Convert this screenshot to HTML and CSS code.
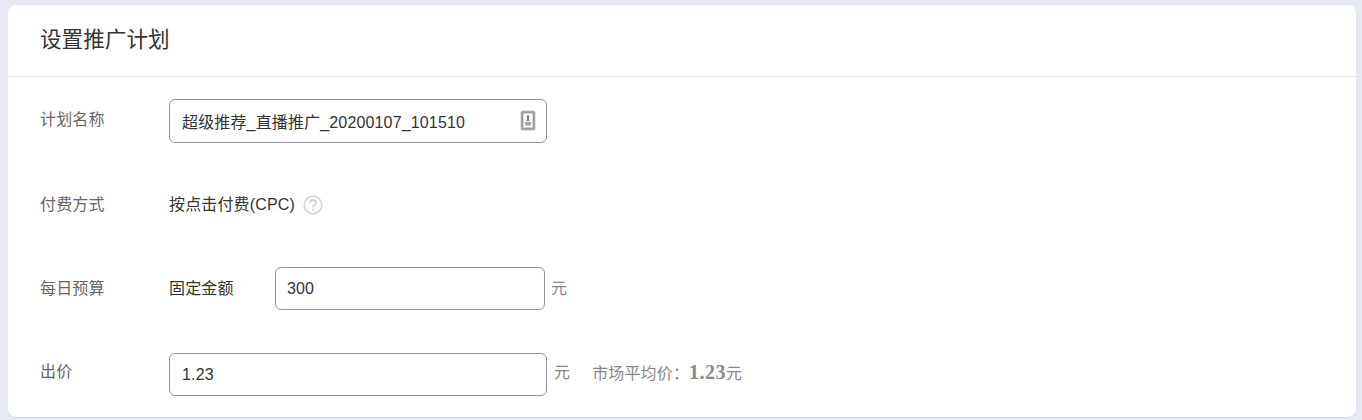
FILE: index.html
```html
<!DOCTYPE html>
<html lang="en">

<head>
    <meta charset="UTF-8">
    <meta name="viewport" content="width=device-width, initial-scale=1.0">
    <title>设置推广计划</title>
    <link rel="stylesheet" href="styles.css">
</head>

<body>
    <div class="card">
        <div class="card-head">设置推广计划</div>
        <div class="form">
            <div class="row row-name">
                <div class="label">计划名称</div>
                <div class="field field-wide">
                    <input type="text" class="text-input" value="超级推荐_直播推广_20200107_101510">
                    <svg class="field-icon" width="16" height="21" viewBox="0 0 16 21">
                        <rect x="0.5" y="0.5" width="15" height="20" rx="1.5" fill="#c9c9c9" />
                        <rect x="1.3" y="1.3" width="13.4" height="18.4" rx="1" fill="#9b9b9b" />
                        <rect x="3.4" y="3.4" width="9.2" height="14.2" fill="#fff" />
                        <path d="M8 5.2c.8 0 1.2.7 1.2 1.5S8.8 8.6 8.6 9.4c.3.5 1.4.7 1.8 1.4H5.6c.4-.7 1.500-.9 1.800-1.400-.2-.8-.6-1.900-.6-2.700S7.200 5.200 8 5.200z" fill="#777" />
                        <path d="M5 11.800h6v3.700H5z" fill="#aaa" />
                    </svg>
                </div>
            </div>
            <div class="row row-pay">
                <div class="label">付费方式</div>
                <div class="value">按点击付费(CPC)</div>
                <svg class="help" width="20" height="20" viewBox="0 0 20 20">
                    <circle cx="10" cy="10" r="8.800" fill="none" stroke="#d6d6d6" stroke-width="1.700" />
                    <path d="M7 8c0-2 1.300-3 3-3s3 1 3 2.700c0 2.300-3 2.300-3 4.500" fill="none" stroke="#cbcbcb" stroke-width="1.500" />
                    <circle cx="10" cy="14.800" r="1" fill="#cbcbcb" />
                </svg>
            </div>
            <div class="row row-budget">
                <div class="label">每日预算</div>
                <div class="value budget-type">固定金额</div>
                <input type="text" class="text-input budget-input" value="300">
                <div class="unit unit-budget">元</div>
            </div>
            <div class="row row-bid">
                <div class="label">出价</div>
                <input type="text" class="text-input bid-input" value="1.23">
                <div class="unit unit-bid">元</div>
                <div class="unit market">市场平均价：<b>1.23</b>元</div>
            </div>
        </div>
    </div>
</body>

</html>
```

FILE: styles.css
```css
* {
    margin: 0;
    padding: 0;
    box-sizing: border-box;
}

body {
    background-color: #e6e9f2;
    font-family: "Liberation Sans", "Noto Sans CJK SC", sans-serif;
    font-size: 16px;
    letter-spacing: 0.15px;
    color: #333;
    height: 420px;
    overflow: hidden;
    padding: 5px 6px 3px 8px;
}

.card {
    background-color: #fff;
    border-radius: 8px;
    height: 412px;
    box-shadow: 0 1px 1px rgba(90, 100, 130, 0.12);
}

.card-head {
    height: 72px;
    padding: 19px 0 0 32px;
    font-size: 21.6px;
    line-height: 32px;
    letter-spacing: 0;
    border-bottom: 1px solid #e6e8ee;
}

.form {
    padding-left: 32px;
}

.row {
    display: flex;
}

.row-name {
    padding-top: 22px;
    align-items: flex-start;
}

.label {
    width: 129px;
    color: #666;
    line-height: 40px;
}

.row-name .label {
    line-height: 42px;
}

.value {
    line-height: 40px;
}

.field {
    position: relative;
}

.text-input {
    height: 44px;
    border: 1px solid #94949f;
    border-radius: 6px;
    padding: 0 12px;
    font: inherit;
    letter-spacing: inherit;
    color: #333;
    outline: none;
}

.field-wide .text-input,
.bid-input {
    width: 378px;
}

.bid-input {
    height: 43px;
}

.field-icon {
    position: absolute;
    right: 11px;
    top: 11px;
}

.row-pay {
    margin-top: 42px;
    align-items: center;
}

.help {
    margin-left: 8px;
}

.row-budget {
    margin-top: 42px;
    align-items: center;
}

.budget-type {
    width: 106px;
}

.budget-input {
    width: 270px;
    height: 43px;
    padding-left: 11px;
}

.unit {
    color: #888;
    line-height: 24px;
}

.unit-budget {
    margin-left: 6px;
}

.row-bid {
    margin-top: 43px;
}

.row-bid .label {
    line-height: 38px;
}

.unit-bid {
    margin: 8px 0 0 7px;
}

.market {
    margin: 7px 0 0 22px;
}

.market b {
    font-family: "Liberation Serif", serif;
    font-size: 20px;
    letter-spacing: 0.5px;
}
```
